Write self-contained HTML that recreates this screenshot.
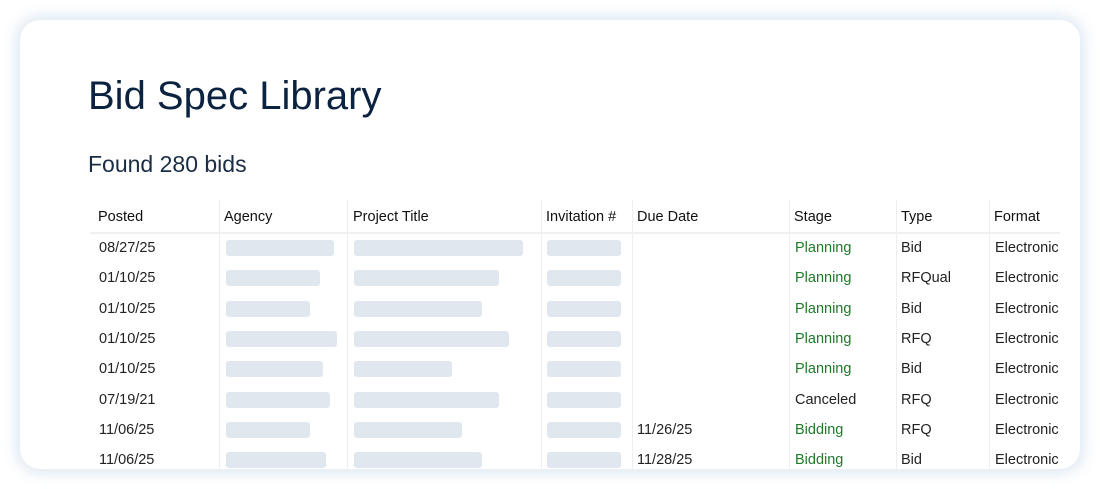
<!DOCTYPE html>
<html><head><meta charset="utf-8"><style>
*{margin:0;padding:0;box-sizing:border-box}
body{width:1100px;height:489px;background:#fff;position:relative;overflow:hidden;font-family:"Liberation Sans",sans-serif;color:#0b2340}
.card{position:absolute;left:20px;top:20px;width:1060px;height:449px;background:#fff;border-radius:20px;box-shadow:0 0 14px 4px rgba(180,205,225,0.45);overflow:hidden}
.t{position:absolute;white-space:nowrap}
.h1{left:68px;top:54px;font-size:40px;color:#0b2340}
.h2{left:68px;top:131px;font-size:23px;color:#1a2d45}
.hd{font-size:14.5px;color:#111}
.c{font-size:14.5px;color:#222}
.g{color:#1f7a2b}
.vl{position:absolute;top:180px;bottom:0;width:1px;background:#eceef0}
.hl{position:absolute;left:70px;width:970px;top:212px;height:2px;background:#eef0f2}
.bar{position:absolute;height:16px;background:#e0e7ee;border-radius:3px}
</style></head><body>
<div class="card">
<div class="t h1">Bid Spec Library</div>
<div class="t h2">Found 280 bids</div>
<div class="vl" style="left:199px"></div>
<div class="vl" style="left:327px"></div>
<div class="vl" style="left:521px"></div>
<div class="vl" style="left:612px"></div>
<div class="vl" style="left:769px"></div>
<div class="vl" style="left:876px"></div>
<div class="vl" style="left:969px"></div>
<div class="hl"></div>
<div class="t hd" style="left:78px;top:189px">Posted</div>
<div class="t hd" style="left:204px;top:189px">Agency</div>
<div class="t hd" style="left:333px;top:189px">Project Title</div>
<div class="t hd" style="left:526px;top:189px">Invitation #</div>
<div class="t hd" style="left:617px;top:189px">Due Date</div>
<div class="t hd" style="left:774px;top:189px">Stage</div>
<div class="t hd" style="left:881px;top:189px">Type</div>
<div class="t hd" style="left:974px;top:189px">Format</div>
<div id="rows"></div>
</div>
<script>
var d=[["08/27/25",334,523,"","Planning","Bid"],["01/10/25",320,499,"","Planning","RFQual"],["01/10/25",310,482,"","Planning","Bid"],["01/10/25",337,509,"","Planning","RFQ"],["01/10/25",323,452,"","Planning","Bid"],["07/19/21",330,499,"","Canceled","RFQ"],["11/06/25",310,462,"11/26/25","Bidding","RFQ"],["11/06/25",326,482,"11/28/25","Bidding","Bid"]];
var h="";
d.forEach(function(r,i){var cy=228+i*30.3;var ty=cy-8;
h+='<div class="t c" style="left:79px;top:'+ty+'px">'+r[0]+'</div>';
h+='<div class="bar" style="left:206px;width:'+(r[1]-226)+'px;top:'+(cy-8)+'px"></div>';
h+='<div class="bar" style="left:334px;width:'+(r[2]-354)+'px;top:'+(cy-8)+'px"></div>';
h+='<div class="bar" style="left:527px;width:74px;top:'+(cy-8)+'px"></div>';
h+='<div class="t c" style="left:617px;top:'+ty+'px">'+r[3]+'</div>';
h+='<div class="t c'+(r[4]=="Canceled"?'':' g')+'" style="left:775px;top:'+ty+'px">'+r[4]+'</div>';
h+='<div class="t c" style="left:881px;top:'+ty+'px">'+r[5]+'</div>';
h+='<div class="t c" style="left:975px;top:'+ty+'px">Electronic</div>';});
document.getElementById("rows").innerHTML=h;
</script>
</body></html>
